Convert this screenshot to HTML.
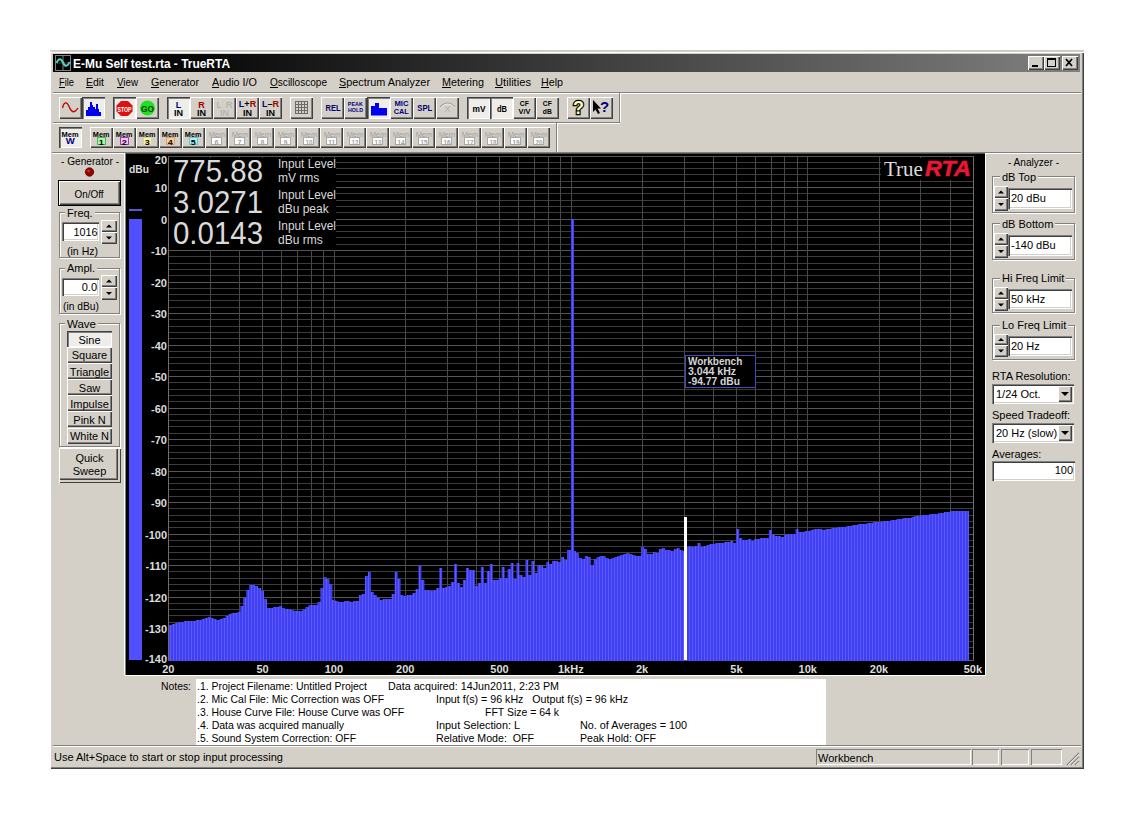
<!DOCTYPE html><html><head><meta charset="utf-8"><style>
html,body{margin:0;padding:0;background:#fff;width:1134px;height:819px;overflow:hidden;}
body{position:relative;font-family:"Liberation Sans",sans-serif;}
div{position:absolute;box-sizing:border-box;}
.t{white-space:pre;line-height:normal;}
</style></head><body>
<div style="position:absolute;left:51px;top:51px;width:1033px;height:718px;background:#d4d0c8;box-shadow:inset 0 1px #d4d0c8,inset 0 2px #fff,inset -1px -1px #404040,inset -2px -2px #808080;"></div>
<div style="position:absolute;left:50px;top:50px;width:1034px;height:1px;background:#c8c8c8;"></div>
<div style="position:absolute;left:53px;top:54px;width:1027px;height:18px;background:linear-gradient(to right,#000 0%,#0a0a0a 15%,#808080 100%);"></div>
<svg style="position:absolute;left:55px;top:55px" width="16" height="16" viewBox="0 0 16 16">
<rect x="0.5" y="0.5" width="15" height="15" fill="#000" stroke="#808080"/>
<line x1="8" y1="1" x2="8" y2="15" stroke="#808080"/><line x1="1" y1="8" x2="15" y2="8" stroke="#404040"/>
<path d="M1.5 8 C3.5 3 6 3 8 7.5 C10 12 12.5 12 14.5 7" fill="none" stroke="#50d0b8" stroke-width="2"/></svg>
<div class="t" style="left:73.00px;top:57px;font-size:12px;color:#fff;font-weight:bold;transform:scaleX(0.9950);transform-origin:0 0;">E-Mu Self test.rta - TrueRTA</div>
<div style="position:absolute;left:1028px;top:56px;width:16px;height:14px;background:#d4d0c8;box-shadow:inset 1px 1px #fff,inset -1px -1px #404040,inset -2px -2px #808080;"></div>
<div style="position:absolute;left:1044px;top:56px;width:16px;height:14px;background:#d4d0c8;box-shadow:inset 1px 1px #fff,inset -1px -1px #404040,inset -2px -2px #808080;"></div>
<div style="position:absolute;left:1062px;top:56px;width:16px;height:14px;background:#d4d0c8;box-shadow:inset 1px 1px #fff,inset -1px -1px #404040,inset -2px -2px #808080;"></div>
<svg style="position:absolute;left:1028px;top:56px" width="50" height="14">
<rect x="4" y="9" width="6" height="2" fill="#000"/>
<rect x="19.5" y="2.5" width="8" height="8" fill="none" stroke="#000"/><rect x="19" y="2" width="9" height="2" fill="#000"/>
<path d="M38 3 L44 10 M44 3 L38 10" stroke="#000" stroke-width="1.7"/></svg>
<div class="t" style="left:59.00px;top:76px;font-size:11px;color:#000;transform:scaleX(0.8463);transform-origin:0 0;">File</div>
<div style="position:absolute;left:59px;top:87px;width:6px;height:1px;background:#000;"></div>
<div class="t" style="left:86.00px;top:76px;font-size:11px;color:#000;transform:scaleX(0.9496);transform-origin:0 0;">Edit</div>
<div style="position:absolute;left:86px;top:87px;width:7px;height:1px;background:#000;"></div>
<div class="t" style="left:117.00px;top:76px;font-size:11px;color:#000;transform:scaleX(0.8882);transform-origin:0 0;">View</div>
<div style="position:absolute;left:117px;top:87px;width:7px;height:1px;background:#000;"></div>
<div class="t" style="left:151.00px;top:76px;font-size:11px;color:#000;transform:scaleX(0.9693);transform-origin:0 0;">Generator</div>
<div style="position:absolute;left:151px;top:87px;width:8px;height:1px;background:#000;"></div>
<div class="t" style="left:212.00px;top:76px;font-size:11px;color:#000;transform:scaleX(0.9813);transform-origin:0 0;">Audio I/O</div>
<div style="position:absolute;left:212px;top:87px;width:7px;height:1px;background:#000;"></div>
<div class="t" style="left:270.00px;top:76px;font-size:11px;color:#000;transform:scaleX(0.9141);transform-origin:0 0;">Oscilloscope</div>
<div style="position:absolute;left:270px;top:87px;width:8px;height:1px;background:#000;"></div>
<div class="t" style="left:339.00px;top:76px;font-size:11px;color:#000;transform:scaleX(0.9858);transform-origin:0 0;">Spectrum Analyzer</div>
<div style="position:absolute;left:339px;top:87px;width:7px;height:1px;background:#000;"></div>
<div class="t" style="left:442.00px;top:76px;font-size:11px;color:#000;transform:scaleX(0.9815);transform-origin:0 0;">Metering</div>
<div style="position:absolute;left:442px;top:87px;width:9px;height:1px;background:#000;"></div>
<div class="t" style="left:495.00px;top:76px;font-size:11px;color:#000;transform:scaleX(1.0155);transform-origin:0 0;">Utilities</div>
<div style="position:absolute;left:495px;top:87px;width:8px;height:1px;background:#000;"></div>
<div class="t" style="left:541.00px;top:76px;font-size:11px;color:#000;transform:scaleX(0.9725);transform-origin:0 0;">Help</div>
<div style="position:absolute;left:541px;top:87px;width:8px;height:1px;background:#000;"></div>
<div style="position:absolute;left:53px;top:92px;width:1028px;height:1px;background:#808080;"></div>
<div style="position:absolute;left:53px;top:93px;width:1028px;height:1px;background:#fff;"></div>
<div style="position:absolute;left:53px;top:122px;width:567px;height:1px;background:#808080;"></div>
<div style="position:absolute;left:53px;top:123px;width:567px;height:1px;background:#fff;"></div>
<div style="position:absolute;left:619px;top:93px;width:1px;height:29px;background:#808080;"></div>
<div style="position:absolute;left:620px;top:93px;width:1px;height:29px;background:#fff;"></div>
<div style="position:absolute;left:556px;top:123px;width:1px;height:29px;background:#808080;"></div>
<div style="position:absolute;left:557px;top:123px;width:1px;height:29px;background:#fff;"></div>
<div style="position:absolute;left:52px;top:152px;width:1029px;height:1px;background:#808080;"></div>
<div style="position:absolute;left:52px;top:153px;width:1029px;height:1px;background:#fff;"></div>
<div style="position:absolute;left:59px;top:97px;width:23px;height:22px;background:#d4d0c8;box-shadow:inset 1px 1px #fff,inset -1px -1px #404040,inset -2px -2px #808080;"></div>
<svg style="position:absolute;left:59px;top:97px" width="23" height="22"><path d="M3.5 11 C5 4.5 8 4.5 10 9.5 C12 14.5 15 17.5 19 11" fill="none" stroke="#c00000" stroke-width="1.3"/></svg>
<div style="position:absolute;left:82px;top:97px;width:23px;height:22px;background:#eeede9;box-shadow:inset 1px 1px #404040,inset 2px 2px #808080,inset -1px -1px #fff;"></div>
<svg style="position:absolute;left:82px;top:97px" width="23" height="22"><path d="M4 19 V13 H6 V10 H8 V5 H10 V8 H11 V10 H13 V12 H14 V7 H16 V12 H17 V15 H19 V19 Z" fill="#0000f0"/></svg>
<div style="position:absolute;left:113px;top:97px;width:23px;height:22px;background:#eeede9;box-shadow:inset 1px 1px #404040,inset 2px 2px #808080,inset -1px -1px #fff;"></div>
<svg style="position:absolute;left:113px;top:97px" width="23" height="22"><path d="M8 4 H15 L19.5 8.5 V14.5 L15 19 H8 L3.5 14.5 V8.5 Z" fill="#e01010"/><text x="11.5" y="14.5" font-family="Liberation Sans" font-weight="bold" font-size="7.5" fill="#fff" text-anchor="middle" textLength="14" lengthAdjust="spacingAndGlyphs">STOP</text></svg>
<div style="position:absolute;left:136px;top:97px;width:23px;height:22px;background:#d4d0c8;box-shadow:inset 1px 1px #fff,inset -1px -1px #404040,inset -2px -2px #808080;"></div>
<svg style="position:absolute;left:136px;top:97px" width="23" height="22"><circle cx="11.5" cy="11" r="7.5" fill="#20e020"/><text x="11.5" y="14.5" font-family="Liberation Sans" font-weight="bold" font-size="9.5" fill="#004000" text-anchor="middle" textLength="13" lengthAdjust="spacingAndGlyphs">GO</text></svg>
<div style="position:absolute;left:167px;top:97px;width:23px;height:22px;background:#eeede9;box-shadow:inset 1px 1px #404040,inset 2px 2px #808080,inset -1px -1px #fff;"></div>
<div class="t" style="left:175.75px;top:100px;font-size:9px;color:#000080;font-weight:bold;">L</div>
<div class="t" style="left:174.00px;top:108px;font-size:9px;color:#000;font-weight:bold;">IN</div>
<div style="position:absolute;left:190px;top:97px;width:23px;height:22px;background:#d4d0c8;box-shadow:inset 1px 1px #fff,inset -1px -1px #404040,inset -2px -2px #808080;"></div>
<div class="t" style="left:198.25px;top:100px;font-size:9px;color:#a00000;font-weight:bold;">R</div>
<div class="t" style="left:197.00px;top:108px;font-size:9px;color:#000;font-weight:bold;">IN</div>
<div style="position:absolute;left:213px;top:97px;width:23px;height:22px;background:#d4d0c8;box-shadow:inset 1px 1px #fff,inset -1px -1px #404040,inset -2px -2px #808080;"></div>
<div class="t" style="left:216.41px;top:100px;font-size:9px;color:#a8a8a8;">L  R</div>
<div class="t" style="left:220.00px;top:108px;font-size:9px;color:#a8a8a8;">IN</div>
<div style="position:absolute;left:236px;top:97px;width:23px;height:22px;background:#d4d0c8;box-shadow:inset 1px 1px #fff,inset -1px -1px #404040,inset -2px -2px #808080;"></div>
<div class="t" style="left:238px;top:99px;width:19px;text-align:center;font-size:9px;font-weight:bold;color:#000080">L<span style="color:#000">+</span><span style="color:#a00000">R</span></div>
<div class="t" style="left:243.00px;top:108px;font-size:9px;color:#000;font-weight:bold;">IN</div>
<div style="position:absolute;left:259px;top:97px;width:23px;height:22px;background:#d4d0c8;box-shadow:inset 1px 1px #fff,inset -1px -1px #404040,inset -2px -2px #808080;"></div>
<div class="t" style="left:261px;top:99px;width:19px;text-align:center;font-size:9px;font-weight:bold;color:#000080">L<span style="color:#000">–</span><span style="color:#a00000">R</span></div>
<div class="t" style="left:266.00px;top:108px;font-size:9px;color:#000;font-weight:bold;">IN</div>
<div style="position:absolute;left:290px;top:97px;width:23px;height:22px;background:#d4d0c8;box-shadow:inset 1px 1px #fff,inset -1px -1px #404040,inset -2px -2px #808080;"></div>
<svg style="position:absolute;left:290px;top:97px" width="23" height="22"><rect x="5" y="4" width="1" height="13" fill="#6a6a6a"/><rect x="8" y="4" width="1" height="13" fill="#6a6a6a"/><rect x="11" y="4" width="1" height="13" fill="#6a6a6a"/><rect x="14" y="4" width="1" height="13" fill="#6a6a6a"/><rect x="17" y="4" width="1" height="13" fill="#6a6a6a"/><rect x="5" y="4" width="13" height="1" fill="#6a6a6a"/><rect x="5" y="7" width="13" height="1" fill="#6a6a6a"/><rect x="5" y="10" width="13" height="1" fill="#6a6a6a"/><rect x="5" y="13" width="13" height="1" fill="#6a6a6a"/><rect x="5" y="16" width="13" height="1" fill="#6a6a6a"/></svg>
<div style="position:absolute;left:321px;top:97px;width:23px;height:22px;background:#d4d0c8;box-shadow:inset 1px 1px #fff,inset -1px -1px #404040,inset -2px -2px #808080;"></div>
<div class="t" style="left:323.50px;top:103px;font-size:9px;color:#000070;font-weight:bold;transform:scaleX(0.8333);transform-origin:50% 0;">REL</div>
<div style="position:absolute;left:344px;top:97px;width:23px;height:22px;background:#d4d0c8;box-shadow:inset 1px 1px #fff,inset -1px -1px #404040,inset -2px -2px #808080;"></div>
<div class="t" style="left:347.16px;top:101px;font-size:6px;color:#000080;font-weight:bold;transform:scaleX(0.8998);transform-origin:50% 0;">PEAK</div>
<div class="t" style="left:347.00px;top:107px;font-size:6px;color:#000080;font-weight:bold;transform:scaleX(0.8825);transform-origin:50% 0;">HOLD</div>
<div style="position:absolute;left:367px;top:97px;width:23px;height:22px;background:#eeede9;box-shadow:inset 1px 1px #404040,inset 2px 2px #808080,inset -1px -1px #fff;"></div>
<svg style="position:absolute;left:367px;top:97px" width="23" height="22"><path d="M4 18.5 V9 H8 V6 H12 V11 H20 V18.5 Z" fill="#0000f0"/></svg>
<div style="position:absolute;left:390px;top:97px;width:23px;height:22px;background:#d4d0c8;box-shadow:inset 1px 1px #fff,inset -1px -1px #404040,inset -2px -2px #808080;"></div>
<div class="t" style="left:395.08px;top:100px;font-size:7px;color:#000080;font-weight:bold;transform:scaleX(1.0911);transform-origin:50% 0;">MIC</div>
<div class="t" style="left:394.31px;top:108px;font-size:7px;color:#000080;font-weight:bold;transform:scaleX(1.0427);transform-origin:50% 0;">CAL</div>
<div style="position:absolute;left:413px;top:97px;width:23px;height:22px;background:#d4d0c8;box-shadow:inset 1px 1px #fff,inset -1px -1px #404040,inset -2px -2px #808080;"></div>
<div class="t" style="left:415.75px;top:103px;font-size:9px;color:#000070;font-weight:bold;transform:scaleX(0.8570);transform-origin:50% 0;">SPL</div>
<div style="position:absolute;left:436px;top:97px;width:23px;height:22px;background:#d4d0c8;box-shadow:inset 1px 1px #fff,inset -1px -1px #404040,inset -2px -2px #808080;"></div>
<svg style="position:absolute;left:436px;top:97px" width="23" height="22"><path d="M4 10 Q11.5 2 19 10" fill="none" stroke="#a0a0a0" stroke-width="1.2"/><path d="M9 9 L14 15 M14 9 L9 15" stroke="#b0b0b0" stroke-width="1"/><path d="M4.5 11 Q11.5 3 19.5 11" fill="none" stroke="#fff" stroke-width="0.6"/></svg>
<div style="position:absolute;left:467px;top:97px;width:23px;height:22px;background:#eeede9;box-shadow:inset 1px 1px #404040,inset 2px 2px #808080,inset -1px -1px #fff;"></div>
<div class="t" style="left:471.50px;top:104px;font-size:9px;color:#000;font-weight:bold;transform:scaleX(0.9282);transform-origin:50% 0;">mV</div>
<div style="position:absolute;left:490px;top:97px;width:23px;height:22px;background:#eeede9;box-shadow:inset 1px 1px #404040,inset 2px 2px #808080,inset -1px -1px #fff;"></div>
<div class="t" style="left:495.50px;top:104px;font-size:9px;color:#000;font-weight:bold;transform:scaleX(0.8336);transform-origin:50% 0;">dB</div>
<div style="position:absolute;left:513px;top:97px;width:23px;height:22px;background:#d4d0c8;box-shadow:inset 1px 1px #fff,inset -1px -1px #404040,inset -2px -2px #808080;"></div>
<div class="t" style="left:519.17px;top:99px;font-size:8px;color:#000;font-weight:bold;transform:scaleX(0.8440);transform-origin:50% 0;">CF</div>
<div class="t" style="left:518.05px;top:107px;font-size:8px;color:#000;font-weight:bold;transform:scaleX(0.9306);transform-origin:50% 0;">V/V</div>
<div style="position:absolute;left:536px;top:97px;width:23px;height:22px;background:#d4d0c8;box-shadow:inset 1px 1px #fff,inset -1px -1px #404040,inset -2px -2px #808080;"></div>
<div class="t" style="left:542.17px;top:99px;font-size:8px;color:#000;font-weight:bold;transform:scaleX(0.8440);transform-origin:50% 0;">CF</div>
<div class="t" style="left:542.17px;top:107px;font-size:8px;color:#000;font-weight:bold;transform:scaleX(0.8440);transform-origin:50% 0;">dB</div>
<div style="position:absolute;left:567px;top:97px;width:23px;height:22px;background:#d4d0c8;box-shadow:inset 1px 1px #fff,inset -1px -1px #404040,inset -2px -2px #808080;"></div>
<svg style="position:absolute;left:567px;top:97px" width="23" height="22"><text x="11.5" y="16.5" font-family="Liberation Sans" font-weight="bold" font-size="18" fill="#ffffb0" stroke="#000" stroke-width="2.4" text-anchor="middle" paint-order="stroke">?</text></svg>
<div style="position:absolute;left:590px;top:97px;width:23px;height:22px;background:#d4d0c8;box-shadow:inset 1px 1px #fff,inset -1px -1px #404040,inset -2px -2px #808080;"></div>
<svg style="position:absolute;left:590px;top:97px" width="23" height="22"><path d="M3 3 L3 15 L5.5 12.5 L8 17 L10 16 L7.5 11.5 L11 11.5 Z" fill="#000"/><text x="14.5" y="14.5" font-family="Liberation Sans" font-weight="bold" font-size="15" fill="#000080" text-anchor="middle">?</text></svg>
<div style="position:absolute;left:59px;top:127px;width:23px;height:21px;background:#eeede9;box-shadow:inset 1px 1px #404040,inset 2px 2px #808080,inset -1px -1px #fff;"></div>
<div class="t" style="left:61.39px;top:130px;font-size:8px;color:#000;font-weight:bold;transform:scaleX(0.9327);transform-origin:50% 0;">Mem</div>
<div class="t" style="left:66.25px;top:136px;font-size:9px;color:#000080;font-weight:bold;transform:scaleX(1.0594);transform-origin:50% 0;">W</div>
<div style="position:absolute;left:90px;top:127px;width:23px;height:21px;background:#d4d0c8;box-shadow:inset 1px 1px #fff,inset -1px -1px #404040,inset -2px -2px #808080;"></div>
<div class="t" style="left:92.39px;top:130px;font-size:8px;color:#000;font-weight:bold;transform:scaleX(0.9053);transform-origin:50% 0;">Mem</div>
<div style="position:absolute;left:97px;top:137px;width:9px;height:8px;background:#b0f0b0;border:1px solid #40c040;"></div>
<div class="t" style="left:99.28px;top:138px;font-size:8px;color:#000;font-weight:bold;transform:scaleX(1.1239);transform-origin:50% 0;">1</div>
<div style="position:absolute;left:113px;top:127px;width:23px;height:21px;background:#d4d0c8;box-shadow:inset 1px 1px #fff,inset -1px -1px #404040,inset -2px -2px #808080;"></div>
<div class="t" style="left:115.39px;top:130px;font-size:8px;color:#000;font-weight:bold;transform:scaleX(0.9053);transform-origin:50% 0;">Mem</div>
<div style="position:absolute;left:120px;top:137px;width:9px;height:8px;background:#f0c0f0;border:1px solid #b030c0;"></div>
<div class="t" style="left:122.28px;top:138px;font-size:8px;color:#000;font-weight:bold;transform:scaleX(1.1239);transform-origin:50% 0;">2</div>
<div style="position:absolute;left:136px;top:127px;width:23px;height:21px;background:#d4d0c8;box-shadow:inset 1px 1px #fff,inset -1px -1px #404040,inset -2px -2px #808080;"></div>
<div class="t" style="left:138.39px;top:130px;font-size:8px;color:#000;font-weight:bold;transform:scaleX(0.9053);transform-origin:50% 0;">Mem</div>
<div style="position:absolute;left:143px;top:137px;width:9px;height:8px;background:#f4f4b0;border:1px solid #d8d890;"></div>
<div class="t" style="left:145.28px;top:138px;font-size:8px;color:#000;font-weight:bold;transform:scaleX(1.1239);transform-origin:50% 0;">3</div>
<div style="position:absolute;left:159px;top:127px;width:23px;height:21px;background:#d4d0c8;box-shadow:inset 1px 1px #fff,inset -1px -1px #404040,inset -2px -2px #808080;"></div>
<div class="t" style="left:161.39px;top:130px;font-size:8px;color:#000;font-weight:bold;transform:scaleX(0.9053);transform-origin:50% 0;">Mem</div>
<div style="position:absolute;left:166px;top:137px;width:9px;height:8px;background:#f4d0a0;border:1px solid #e0a060;"></div>
<div class="t" style="left:168.28px;top:138px;font-size:8px;color:#000;font-weight:bold;transform:scaleX(1.1239);transform-origin:50% 0;">4</div>
<div style="position:absolute;left:182px;top:127px;width:23px;height:21px;background:#d4d0c8;box-shadow:inset 1px 1px #fff,inset -1px -1px #404040,inset -2px -2px #808080;"></div>
<div class="t" style="left:184.39px;top:130px;font-size:8px;color:#000;font-weight:bold;transform:scaleX(0.9053);transform-origin:50% 0;">Mem</div>
<div style="position:absolute;left:189px;top:137px;width:9px;height:8px;background:#b0f0f0;border:1px solid #60c8d0;"></div>
<div class="t" style="left:191.28px;top:138px;font-size:8px;color:#000;font-weight:bold;transform:scaleX(1.1239);transform-origin:50% 0;">5</div>
<div style="position:absolute;left:205px;top:127px;width:23px;height:21px;background:#d4d0c8;box-shadow:inset 1px 1px #fff,inset -1px -1px #404040,inset -2px -2px #808080;"></div>
<div class="t" style="left:207.61px;top:130px;font-size:8px;color:#a0a0a0;transform:scaleX(0.9282);transform-origin:50% 0;">Mem</div>
<div style="position:absolute;left:211px;top:137px;width:11px;height:8px;border:1px solid #a8a8a8;background:#fff;"></div>
<div class="t" style="left:214.55px;top:139px;font-size:7px;color:#a0a0a0;font-weight:bold;">6</div>
<div style="position:absolute;left:228px;top:127px;width:23px;height:21px;background:#d4d0c8;box-shadow:inset 1px 1px #fff,inset -1px -1px #404040,inset -2px -2px #808080;"></div>
<div class="t" style="left:230.61px;top:130px;font-size:8px;color:#a0a0a0;transform:scaleX(0.9282);transform-origin:50% 0;">Mem</div>
<div style="position:absolute;left:234px;top:137px;width:11px;height:8px;border:1px solid #a8a8a8;background:#fff;"></div>
<div class="t" style="left:237.55px;top:139px;font-size:7px;color:#a0a0a0;font-weight:bold;">7</div>
<div style="position:absolute;left:251px;top:127px;width:23px;height:21px;background:#d4d0c8;box-shadow:inset 1px 1px #fff,inset -1px -1px #404040,inset -2px -2px #808080;"></div>
<div class="t" style="left:253.61px;top:130px;font-size:8px;color:#a0a0a0;transform:scaleX(0.9282);transform-origin:50% 0;">Mem</div>
<div style="position:absolute;left:257px;top:137px;width:11px;height:8px;border:1px solid #a8a8a8;background:#fff;"></div>
<div class="t" style="left:260.55px;top:139px;font-size:7px;color:#a0a0a0;font-weight:bold;">8</div>
<div style="position:absolute;left:274px;top:127px;width:23px;height:21px;background:#d4d0c8;box-shadow:inset 1px 1px #fff,inset -1px -1px #404040,inset -2px -2px #808080;"></div>
<div class="t" style="left:276.61px;top:130px;font-size:8px;color:#a0a0a0;transform:scaleX(0.9282);transform-origin:50% 0;">Mem</div>
<div style="position:absolute;left:280px;top:137px;width:11px;height:8px;border:1px solid #a8a8a8;background:#fff;"></div>
<div class="t" style="left:283.55px;top:139px;font-size:7px;color:#a0a0a0;font-weight:bold;">9</div>
<div style="position:absolute;left:297px;top:127px;width:23px;height:21px;background:#d4d0c8;box-shadow:inset 1px 1px #fff,inset -1px -1px #404040,inset -2px -2px #808080;"></div>
<div class="t" style="left:299.61px;top:130px;font-size:8px;color:#a0a0a0;transform:scaleX(0.9282);transform-origin:50% 0;">Mem</div>
<div style="position:absolute;left:303px;top:137px;width:11px;height:8px;border:1px solid #a8a8a8;background:#fff;"></div>
<div class="t" style="left:304.61px;top:139px;font-size:7px;color:#a0a0a0;font-weight:bold;transform:scaleX(0.8991);transform-origin:50% 0;">10</div>
<div style="position:absolute;left:320px;top:127px;width:23px;height:21px;background:#d4d0c8;box-shadow:inset 1px 1px #fff,inset -1px -1px #404040,inset -2px -2px #808080;"></div>
<div class="t" style="left:322.61px;top:130px;font-size:8px;color:#a0a0a0;transform:scaleX(0.9282);transform-origin:50% 0;">Mem</div>
<div style="position:absolute;left:326px;top:137px;width:11px;height:8px;border:1px solid #a8a8a8;background:#fff;"></div>
<div class="t" style="left:327.80px;top:139px;font-size:7px;color:#a0a0a0;font-weight:bold;transform:scaleX(0.9460);transform-origin:50% 0;">11</div>
<div style="position:absolute;left:343px;top:127px;width:23px;height:21px;background:#d4d0c8;box-shadow:inset 1px 1px #fff,inset -1px -1px #404040,inset -2px -2px #808080;"></div>
<div class="t" style="left:345.61px;top:130px;font-size:8px;color:#a0a0a0;transform:scaleX(0.9282);transform-origin:50% 0;">Mem</div>
<div style="position:absolute;left:349px;top:137px;width:11px;height:8px;border:1px solid #a8a8a8;background:#fff;"></div>
<div class="t" style="left:350.61px;top:139px;font-size:7px;color:#a0a0a0;font-weight:bold;transform:scaleX(0.8991);transform-origin:50% 0;">12</div>
<div style="position:absolute;left:366px;top:127px;width:23px;height:21px;background:#d4d0c8;box-shadow:inset 1px 1px #fff,inset -1px -1px #404040,inset -2px -2px #808080;"></div>
<div class="t" style="left:368.61px;top:130px;font-size:8px;color:#a0a0a0;transform:scaleX(0.9282);transform-origin:50% 0;">Mem</div>
<div style="position:absolute;left:372px;top:137px;width:11px;height:8px;border:1px solid #a8a8a8;background:#fff;"></div>
<div class="t" style="left:373.61px;top:139px;font-size:7px;color:#a0a0a0;font-weight:bold;transform:scaleX(0.8991);transform-origin:50% 0;">13</div>
<div style="position:absolute;left:389px;top:127px;width:23px;height:21px;background:#d4d0c8;box-shadow:inset 1px 1px #fff,inset -1px -1px #404040,inset -2px -2px #808080;"></div>
<div class="t" style="left:391.61px;top:130px;font-size:8px;color:#a0a0a0;transform:scaleX(0.9282);transform-origin:50% 0;">Mem</div>
<div style="position:absolute;left:395px;top:137px;width:11px;height:8px;border:1px solid #a8a8a8;background:#fff;"></div>
<div class="t" style="left:396.61px;top:139px;font-size:7px;color:#a0a0a0;font-weight:bold;transform:scaleX(0.8991);transform-origin:50% 0;">14</div>
<div style="position:absolute;left:412px;top:127px;width:23px;height:21px;background:#d4d0c8;box-shadow:inset 1px 1px #fff,inset -1px -1px #404040,inset -2px -2px #808080;"></div>
<div class="t" style="left:414.61px;top:130px;font-size:8px;color:#a0a0a0;transform:scaleX(0.9282);transform-origin:50% 0;">Mem</div>
<div style="position:absolute;left:418px;top:137px;width:11px;height:8px;border:1px solid #a8a8a8;background:#fff;"></div>
<div class="t" style="left:419.61px;top:139px;font-size:7px;color:#a0a0a0;font-weight:bold;transform:scaleX(0.8991);transform-origin:50% 0;">15</div>
<div style="position:absolute;left:435px;top:127px;width:23px;height:21px;background:#d4d0c8;box-shadow:inset 1px 1px #fff,inset -1px -1px #404040,inset -2px -2px #808080;"></div>
<div class="t" style="left:437.61px;top:130px;font-size:8px;color:#a0a0a0;transform:scaleX(0.9282);transform-origin:50% 0;">Mem</div>
<div style="position:absolute;left:441px;top:137px;width:11px;height:8px;border:1px solid #a8a8a8;background:#fff;"></div>
<div class="t" style="left:442.61px;top:139px;font-size:7px;color:#a0a0a0;font-weight:bold;transform:scaleX(0.8991);transform-origin:50% 0;">16</div>
<div style="position:absolute;left:458px;top:127px;width:23px;height:21px;background:#d4d0c8;box-shadow:inset 1px 1px #fff,inset -1px -1px #404040,inset -2px -2px #808080;"></div>
<div class="t" style="left:460.61px;top:130px;font-size:8px;color:#a0a0a0;transform:scaleX(0.9282);transform-origin:50% 0;">Mem</div>
<div style="position:absolute;left:464px;top:137px;width:11px;height:8px;border:1px solid #a8a8a8;background:#fff;"></div>
<div class="t" style="left:465.61px;top:139px;font-size:7px;color:#a0a0a0;font-weight:bold;transform:scaleX(0.8991);transform-origin:50% 0;">17</div>
<div style="position:absolute;left:481px;top:127px;width:23px;height:21px;background:#d4d0c8;box-shadow:inset 1px 1px #fff,inset -1px -1px #404040,inset -2px -2px #808080;"></div>
<div class="t" style="left:483.61px;top:130px;font-size:8px;color:#a0a0a0;transform:scaleX(0.9282);transform-origin:50% 0;">Mem</div>
<div style="position:absolute;left:487px;top:137px;width:11px;height:8px;border:1px solid #a8a8a8;background:#fff;"></div>
<div class="t" style="left:488.61px;top:139px;font-size:7px;color:#a0a0a0;font-weight:bold;transform:scaleX(0.8991);transform-origin:50% 0;">18</div>
<div style="position:absolute;left:504px;top:127px;width:23px;height:21px;background:#d4d0c8;box-shadow:inset 1px 1px #fff,inset -1px -1px #404040,inset -2px -2px #808080;"></div>
<div class="t" style="left:506.61px;top:130px;font-size:8px;color:#a0a0a0;transform:scaleX(0.9282);transform-origin:50% 0;">Mem</div>
<div style="position:absolute;left:510px;top:137px;width:11px;height:8px;border:1px solid #a8a8a8;background:#fff;"></div>
<div class="t" style="left:511.61px;top:139px;font-size:7px;color:#a0a0a0;font-weight:bold;transform:scaleX(0.8991);transform-origin:50% 0;">19</div>
<div style="position:absolute;left:527px;top:127px;width:23px;height:21px;background:#d4d0c8;box-shadow:inset 1px 1px #fff,inset -1px -1px #404040,inset -2px -2px #808080;"></div>
<div class="t" style="left:529.61px;top:130px;font-size:8px;color:#a0a0a0;transform:scaleX(0.9282);transform-origin:50% 0;">Mem</div>
<div style="position:absolute;left:533px;top:137px;width:11px;height:8px;border:1px solid #a8a8a8;background:#fff;"></div>
<div class="t" style="left:534.61px;top:139px;font-size:7px;color:#a0a0a0;font-weight:bold;transform:scaleX(0.8991);transform-origin:50% 0;">20</div>
<svg style="position:absolute;left:0;top:0" width="1134" height="819"><defs><pattern id="st" x="0" y="0" width="3" height="10" patternUnits="userSpaceOnUse"><rect x="0" y="0" width="2" height="10" fill="#4040f2"/><rect x="2" y="0" width="1" height="10" fill="#5a5aff"/></pattern></defs><rect x="125" y="153" width="861" height="1" fill="#505050"/><rect x="125" y="153" width="1" height="523" fill="#808080"/><rect x="125" y="675" width="861" height="1" fill="#fff"/><rect x="985" y="153" width="1" height="523" fill="#fff"/><rect x="126" y="154" width="859" height="521" fill="#000"/><rect x="168" y="156" width="806" height="1" fill="#565656"/><rect x="168" y="162" width="806" height="1" fill="#3c3c3c"/><rect x="168" y="168" width="806" height="1" fill="#3c3c3c"/><rect x="168" y="174" width="806" height="1" fill="#3c3c3c"/><rect x="168" y="181" width="806" height="1" fill="#3c3c3c"/><rect x="168" y="187" width="806" height="1" fill="#565656"/><rect x="168" y="193" width="806" height="1" fill="#3c3c3c"/><rect x="168" y="200" width="806" height="1" fill="#3c3c3c"/><rect x="168" y="206" width="806" height="1" fill="#3c3c3c"/><rect x="168" y="212" width="806" height="1" fill="#3c3c3c"/><rect x="168" y="219" width="806" height="1" fill="#565656"/><rect x="168" y="225" width="806" height="1" fill="#3c3c3c"/><rect x="168" y="231" width="806" height="1" fill="#3c3c3c"/><rect x="168" y="237" width="806" height="1" fill="#3c3c3c"/><rect x="168" y="244" width="806" height="1" fill="#3c3c3c"/><rect x="168" y="250" width="806" height="1" fill="#565656"/><rect x="168" y="256" width="806" height="1" fill="#3c3c3c"/><rect x="168" y="263" width="806" height="1" fill="#3c3c3c"/><rect x="168" y="269" width="806" height="1" fill="#3c3c3c"/><rect x="168" y="275" width="806" height="1" fill="#3c3c3c"/><rect x="168" y="282" width="806" height="1" fill="#565656"/><rect x="168" y="288" width="806" height="1" fill="#3c3c3c"/><rect x="168" y="294" width="806" height="1" fill="#3c3c3c"/><rect x="168" y="300" width="806" height="1" fill="#3c3c3c"/><rect x="168" y="307" width="806" height="1" fill="#3c3c3c"/><rect x="168" y="313" width="806" height="1" fill="#565656"/><rect x="168" y="319" width="806" height="1" fill="#3c3c3c"/><rect x="168" y="326" width="806" height="1" fill="#3c3c3c"/><rect x="168" y="332" width="806" height="1" fill="#3c3c3c"/><rect x="168" y="338" width="806" height="1" fill="#3c3c3c"/><rect x="168" y="345" width="806" height="1" fill="#565656"/><rect x="168" y="351" width="806" height="1" fill="#3c3c3c"/><rect x="168" y="357" width="806" height="1" fill="#3c3c3c"/><rect x="168" y="363" width="806" height="1" fill="#3c3c3c"/><rect x="168" y="370" width="806" height="1" fill="#3c3c3c"/><rect x="168" y="376" width="806" height="1" fill="#565656"/><rect x="168" y="382" width="806" height="1" fill="#3c3c3c"/><rect x="168" y="389" width="806" height="1" fill="#3c3c3c"/><rect x="168" y="395" width="806" height="1" fill="#3c3c3c"/><rect x="168" y="401" width="806" height="1" fill="#3c3c3c"/><rect x="168" y="408" width="806" height="1" fill="#565656"/><rect x="168" y="414" width="806" height="1" fill="#3c3c3c"/><rect x="168" y="420" width="806" height="1" fill="#3c3c3c"/><rect x="168" y="426" width="806" height="1" fill="#3c3c3c"/><rect x="168" y="433" width="806" height="1" fill="#3c3c3c"/><rect x="168" y="439" width="806" height="1" fill="#565656"/><rect x="168" y="445" width="806" height="1" fill="#3c3c3c"/><rect x="168" y="452" width="806" height="1" fill="#3c3c3c"/><rect x="168" y="458" width="806" height="1" fill="#3c3c3c"/><rect x="168" y="464" width="806" height="1" fill="#3c3c3c"/><rect x="168" y="471" width="806" height="1" fill="#565656"/><rect x="168" y="477" width="806" height="1" fill="#3c3c3c"/><rect x="168" y="483" width="806" height="1" fill="#3c3c3c"/><rect x="168" y="489" width="806" height="1" fill="#3c3c3c"/><rect x="168" y="496" width="806" height="1" fill="#3c3c3c"/><rect x="168" y="502" width="806" height="1" fill="#565656"/><rect x="168" y="508" width="806" height="1" fill="#3c3c3c"/><rect x="168" y="515" width="806" height="1" fill="#3c3c3c"/><rect x="168" y="521" width="806" height="1" fill="#3c3c3c"/><rect x="168" y="527" width="806" height="1" fill="#3c3c3c"/><rect x="168" y="534" width="806" height="1" fill="#565656"/><rect x="168" y="540" width="806" height="1" fill="#3c3c3c"/><rect x="168" y="546" width="806" height="1" fill="#3c3c3c"/><rect x="168" y="552" width="806" height="1" fill="#3c3c3c"/><rect x="168" y="559" width="806" height="1" fill="#3c3c3c"/><rect x="168" y="565" width="806" height="1" fill="#565656"/><rect x="168" y="571" width="806" height="1" fill="#3c3c3c"/><rect x="168" y="578" width="806" height="1" fill="#3c3c3c"/><rect x="168" y="584" width="806" height="1" fill="#3c3c3c"/><rect x="168" y="590" width="806" height="1" fill="#3c3c3c"/><rect x="168" y="597" width="806" height="1" fill="#565656"/><rect x="168" y="603" width="806" height="1" fill="#3c3c3c"/><rect x="168" y="609" width="806" height="1" fill="#3c3c3c"/><rect x="168" y="615" width="806" height="1" fill="#3c3c3c"/><rect x="168" y="622" width="806" height="1" fill="#3c3c3c"/><rect x="168" y="628" width="806" height="1" fill="#565656"/><rect x="168" y="634" width="806" height="1" fill="#3c3c3c"/><rect x="168" y="641" width="806" height="1" fill="#3c3c3c"/><rect x="168" y="647" width="806" height="1" fill="#3c3c3c"/><rect x="168" y="653" width="806" height="1" fill="#3c3c3c"/><rect x="168" y="660" width="806" height="1" fill="#565656"/><rect x="168" y="157" width="1" height="503" fill="#6e6e6e"/><rect x="210" y="157" width="1" height="503" fill="#484848"/><rect x="239" y="157" width="1" height="503" fill="#484848"/><rect x="262" y="157" width="1" height="503" fill="#484848"/><rect x="281" y="157" width="1" height="503" fill="#484848"/><rect x="297" y="157" width="1" height="503" fill="#484848"/><rect x="311" y="157" width="1" height="503" fill="#484848"/><rect x="323" y="157" width="1" height="503" fill="#484848"/><rect x="334" y="157" width="1" height="503" fill="#484848"/><rect x="405" y="157" width="1" height="503" fill="#484848"/><rect x="447" y="157" width="1" height="503" fill="#484848"/><rect x="476" y="157" width="1" height="503" fill="#484848"/><rect x="499" y="157" width="1" height="503" fill="#484848"/><rect x="518" y="157" width="1" height="503" fill="#484848"/><rect x="534" y="157" width="1" height="503" fill="#484848"/><rect x="548" y="157" width="1" height="503" fill="#484848"/><rect x="560" y="157" width="1" height="503" fill="#484848"/><rect x="571" y="157" width="1" height="503" fill="#484848"/><rect x="642" y="157" width="1" height="503" fill="#484848"/><rect x="684" y="157" width="1" height="503" fill="#484848"/><rect x="713" y="157" width="1" height="503" fill="#484848"/><rect x="736" y="157" width="1" height="503" fill="#484848"/><rect x="755" y="157" width="1" height="503" fill="#484848"/><rect x="771" y="157" width="1" height="503" fill="#484848"/><rect x="784" y="157" width="1" height="503" fill="#484848"/><rect x="797" y="157" width="1" height="503" fill="#484848"/><rect x="807" y="157" width="1" height="503" fill="#484848"/><rect x="879" y="157" width="1" height="503" fill="#484848"/><rect x="920" y="157" width="1" height="503" fill="#484848"/><rect x="950" y="157" width="1" height="503" fill="#484848"/><rect x="973" y="157" width="1" height="503" fill="#6e6e6e"/><path d="M169 661 V625 H172.0 V624 H174.9 V623 H177.9 V622 H180.9 V622 H183.8 V621 H186.8 V621 H189.8 V621 H192.8 V621 H195.7 V620 H198.7 V620 H201.7 V619 H204.6 V618 H207.6 V617 H210.6 V618 H213.5 V619 H216.5 V620 H219.5 V619 H222.5 V618 H225.4 V616 H228.4 V614 H231.4 V613 H234.3 V613 H237.3 V612 H240.3 V606 H243.2 V598 H246.2 V590 H249.2 V585 H252.2 V585 H255.1 V586 H258.1 V588 H261.1 V591 H264.0 V599 H267.0 V608 H270.0 V608 H272.9 V607 H275.9 V607 H278.9 V606 H281.9 V608 H284.8 V609 H287.8 V609 H290.8 V610 H293.7 V611 H296.7 V611 H299.7 V611 H302.6 V609 H305.6 V607 H308.6 V605 H311.6 V605 H314.5 V605 H317.5 V602 H320.5 V588 H323.4 V577 H326.4 V579 H329.4 V584 H332.3 V600 H335.3 V601 H338.3 V602 H341.2 V602 H344.2 V601 H347.2 V601 H350.2 V602 H353.1 V601 H356.1 V601 H359.1 V595 H362.0 V594 H365.0 V576 H368.0 V572 H370.9 V592 H373.9 V595 H376.9 V598 H379.9 V600 H382.8 V599 H385.8 V599 H388.8 V599 H391.7 V594 H394.7 V572 H397.7 V579 H400.6 V595 H403.6 V596 H406.6 V595 H409.6 V595 H412.5 V593 H415.5 V589 H418.5 V566 H421.4 V580 H424.4 V590 H427.4 V590 H430.3 V591 H433.3 V590 H436.3 V588 H439.3 V568 H442.2 V588 H445.2 V587 H448.2 V586 H451.1 V582 H454.1 V564 H457.1 V583 H460.0 V587 H463.0 V580 H466.0 V568 H469.0 V570 H471.9 V570 H474.9 V586 H477.9 V583 H480.8 V567 H483.8 V583 H486.8 V571 H489.7 V564 H492.7 V580 H495.7 V580 H498.7 V578 H501.6 V567 H504.6 V578 H507.6 V569 H510.5 V563 H513.5 V579 H516.5 V563 H519.4 V575 H522.4 V577 H525.4 V560 H528.3 V575 H531.3 V561 H534.3 V573 H537.3 V565 H540.2 V566 H543.2 V568 H546.2 V562 H549.1 V564 H552.1 V561 H555.1 V561 H558.0 V562 H561.0 V557 H564.0 V560 H567.0 V550 H569.9 V550 H572.9 V551 H575.9 V553 H578.8 V558 H581.8 V559 H584.8 V556 H587.7 V557 H590.7 V565 H593.7 V559 H596.7 V557 H599.6 V556 H602.6 V556 H605.6 V558 H608.5 V559 H611.5 V558 H614.5 V557 H617.4 V556 H620.4 V555 H623.4 V554 H626.4 V553 H629.3 V554 H632.3 V555 H635.3 V556 H638.2 V556 H641.2 V547 H644.2 V549 H647.1 V554 H650.1 V554 H653.1 V552 H656.1 V553 H659.0 V549 H662.0 V548 H665.0 V550 H667.9 V550 H670.9 V551 H673.9 V549 H676.8 V548 H679.8 V550 H682.8 V551 H685.7 V547 H688.7 V546 H691.7 V547 H694.7 V546 H697.6 V543 H700.6 V547 H703.6 V546 H706.5 V545 H709.5 V544 H712.5 V544 H715.4 V543 H718.4 V543 H721.4 V543 H724.4 V542 H727.3 V542 H730.3 V541 H733.3 V543 H736.2 V529 H739.2 V538 H742.2 V540 H745.1 V540 H748.1 V539 H751.1 V541 H754.1 V539 H757.0 V539 H760.0 V538 H763.0 V538 H765.9 V538 H768.9 V530 H771.9 V535 H774.8 V536 H777.8 V536 H780.8 V537 H783.8 V535 H786.7 V534 H789.7 V534 H792.7 V534 H795.6 V529 H798.6 V532 H801.6 V532 H804.5 V531 H807.5 V531 H810.5 V530 H813.5 V529 H816.4 V529 H819.4 V529 H822.4 V530 H825.3 V529 H828.3 V529 H831.3 V528 H834.2 V528 H837.2 V527 H840.2 V527 H843.1 V527 H846.1 V526 H849.1 V526 H852.1 V525 H855.0 V525 H858.0 V524 H861.0 V524 H863.9 V524 H866.9 V523 H869.9 V523 H872.8 V522 H875.8 V522 H878.8 V522 H881.8 V521 H884.7 V521 H887.7 V521 H890.7 V520 H893.6 V520 H896.6 V519 H899.6 V519 H902.5 V518 H905.5 V518 H908.5 V518 H911.5 V517 H914.4 V516 H917.4 V516 H920.4 V515 H923.3 V515 H926.3 V515 H929.3 V514 H932.2 V514 H935.2 V514 H938.2 V513 H941.2 V513 H944.1 V512 H947.1 V512 H950.1 V511 H953.0 V511 H956.0 V511 H959.0 V511 H961.9 V511 H964.9 V511 H967.9 V511 H969.0 V661 Z" fill="url(#st)"/><rect x="571" y="219" width="3" height="442" fill="url(#st)"/><rect x="129" y="219" width="13" height="441" fill="#5050ff"/><rect x="129" y="209" width="13" height="2" fill="#5a5ad0"/><rect x="169" y="158" width="167" height="92" fill="#000"/><rect x="881" y="158" width="92" height="22" fill="#000"/><rect x="684" y="517" width="3" height="143" fill="#fff"/><rect x="685.5" y="355.5" width="70" height="32" fill="#000" stroke="#4848b8" stroke-width="1"/></svg>
<div class="t" style="left:154.77px;top:154px;font-size:11px;color:#dcdcdc;font-weight:bold;">20</div>
<div class="t" style="left:154.77px;top:182px;font-size:11px;color:#dcdcdc;font-weight:bold;">10</div>
<div class="t" style="left:160.88px;top:214px;font-size:11px;color:#dcdcdc;font-weight:bold;">0</div>
<div class="t" style="left:151.10px;top:245px;font-size:11px;color:#dcdcdc;font-weight:bold;">-10</div>
<div class="t" style="left:151.10px;top:277px;font-size:11px;color:#dcdcdc;font-weight:bold;">-20</div>
<div class="t" style="left:151.10px;top:308px;font-size:11px;color:#dcdcdc;font-weight:bold;">-30</div>
<div class="t" style="left:151.10px;top:340px;font-size:11px;color:#dcdcdc;font-weight:bold;">-40</div>
<div class="t" style="left:151.10px;top:371px;font-size:11px;color:#dcdcdc;font-weight:bold;">-50</div>
<div class="t" style="left:151.10px;top:403px;font-size:11px;color:#dcdcdc;font-weight:bold;">-60</div>
<div class="t" style="left:151.10px;top:434px;font-size:11px;color:#dcdcdc;font-weight:bold;">-70</div>
<div class="t" style="left:151.10px;top:466px;font-size:11px;color:#dcdcdc;font-weight:bold;">-80</div>
<div class="t" style="left:151.10px;top:497px;font-size:11px;color:#dcdcdc;font-weight:bold;">-90</div>
<div class="t" style="left:144.99px;top:529px;font-size:11px;color:#dcdcdc;font-weight:bold;">-100</div>
<div class="t" style="left:145.59px;top:560px;font-size:11px;color:#dcdcdc;font-weight:bold;">-110</div>
<div class="t" style="left:144.99px;top:592px;font-size:11px;color:#dcdcdc;font-weight:bold;">-120</div>
<div class="t" style="left:144.99px;top:623px;font-size:11px;color:#dcdcdc;font-weight:bold;">-130</div>
<div class="t" style="left:144.99px;top:653px;font-size:11px;color:#dcdcdc;font-weight:bold;">-140</div>
<div class="t" style="left:129.00px;top:163px;font-size:11px;color:#dcdcdc;font-weight:bold;transform:scaleX(0.9354);transform-origin:0 0;">dBu</div>
<div class="t" style="left:162.18px;top:663px;font-size:11px;color:#dcdcdc;font-weight:bold;">20</div>
<div class="t" style="left:256.46px;top:663px;font-size:11px;color:#dcdcdc;font-weight:bold;">50</div>
<div class="t" style="left:324.72px;top:663px;font-size:11px;color:#dcdcdc;font-weight:bold;">100</div>
<div class="t" style="left:396.03px;top:663px;font-size:11px;color:#dcdcdc;font-weight:bold;">200</div>
<div class="t" style="left:490.31px;top:663px;font-size:11px;color:#dcdcdc;font-weight:bold;">500</div>
<div class="t" style="left:557.96px;top:663px;font-size:11px;color:#dcdcdc;font-weight:bold;">1kHz</div>
<div class="t" style="left:636.00px;top:663px;font-size:11px;color:#dcdcdc;font-weight:bold;">2k</div>
<div class="t" style="left:730.27px;top:663px;font-size:11px;color:#dcdcdc;font-weight:bold;">5k</div>
<div class="t" style="left:798.53px;top:663px;font-size:11px;color:#dcdcdc;font-weight:bold;">10k</div>
<div class="t" style="left:869.85px;top:663px;font-size:11px;color:#dcdcdc;font-weight:bold;">20k</div>
<div class="t" style="left:963.65px;top:663px;font-size:11px;color:#dcdcdc;font-weight:bold;">50k</div>
<div class="t" style="left:173.00px;top:154px;font-size:31px;color:#dadada;transform:scaleX(0.9493);transform-origin:0 0;">775.88</div>
<div class="t" style="left:278.00px;top:157px;font-size:12px;color:#dadada;transform:scaleX(0.9880);transform-origin:0 0;">Input Level</div>
<div class="t" style="left:278.00px;top:171px;font-size:12px;color:#dadada;">mV rms</div>
<div class="t" style="left:173.00px;top:185px;font-size:31px;color:#dadada;transform:scaleX(0.9493);transform-origin:0 0;">3.0271</div>
<div class="t" style="left:278.00px;top:188px;font-size:12px;color:#dadada;transform:scaleX(0.9880);transform-origin:0 0;">Input Level</div>
<div class="t" style="left:278.00px;top:202px;font-size:12px;color:#dadada;">dBu peak</div>
<div class="t" style="left:173.00px;top:216px;font-size:31px;color:#dadada;transform:scaleX(0.9493);transform-origin:0 0;">0.0143</div>
<div class="t" style="left:278.00px;top:219px;font-size:12px;color:#dadada;transform:scaleX(0.9880);transform-origin:0 0;">Input Level</div>
<div class="t" style="left:278.00px;top:233px;font-size:12px;color:#dadada;">dBu rms</div>
<div class="t" style="left:884px;top:157px;font-family:'Liberation Serif',serif;font-size:21px;color:#dcdcdc;">True</div>
<div class="t" style="left:925px;top:156px;font-size:22px;font-weight:bold;font-style:italic;color:#ec1632;-webkit-text-stroke:0.5px #ec1632;transform:scaleX(1.06);transform-origin:0 0;">RTA</div>
<div class="t" style="left:688.00px;top:356px;font-size:10px;color:#d4d4d4;font-weight:bold;">Workbench</div>
<div class="t" style="left:688.00px;top:366px;font-size:10px;color:#d4d4d4;font-weight:bold;transform:scaleX(1.0530);transform-origin:0 0;">3.044 kHz</div>
<div class="t" style="left:688.00px;top:376px;font-size:10px;color:#d4d4d4;font-weight:bold;transform:scaleX(1.0283);transform-origin:0 0;">-94.77 dBu</div>
<div style="position:absolute;left:51px;top:154px;width:74px;height:521px;background:#d4d0c8;"></div>
<div style="position:absolute;left:124px;top:154px;width:1px;height:521px;background:#fff;"></div>
<div class="t" style="left:61.00px;top:155px;font-size:11px;color:#000;transform:scaleX(0.9212);transform-origin:0 0;">- Generator -</div>
<svg style="position:absolute;left:84px;top:167px" width="11" height="11"><circle cx="5.5" cy="5" r="4.2" fill="#9a0000" stroke="#600000" stroke-width="0.8"/><circle cx="4.5" cy="4" r="1.2" fill="#c04040"/></svg>
<div style="position:absolute;left:58px;top:180px;width:63px;height:26px;background:#000;"></div>
<div style="position:absolute;left:59px;top:181px;width:61px;height:24px;background:#d4d0c8;box-shadow:inset 1px 1px #fff,inset -1px -1px #404040,inset -2px -2px #808080;"></div>
<div class="t" style="left:73.40px;top:188px;font-size:11px;color:#000;transform:scaleX(0.9007);transform-origin:50% 0;">On/Off</div>
<div style="position:absolute;left:59px;top:212px;width:61px;height:46px;border:1px solid #808080;box-shadow:1px 1px #fff, inset 1px 1px #fff;"></div>
<div style="position:absolute;left:65px;top:209px;width:29.67125px;height:6px;background:#d4d0c8;"></div>
<div class="t" style="left:67.00px;top:207px;font-size:11px;color:#000;">Freq.</div>
<div style="position:absolute;left:62px;top:222px;width:37px;height:19px;background:#fff;box-shadow:inset 1px 1px #808080,inset 2px 2px #404040,inset -1px -1px #fff,inset -2px -2px #d4d0c8;"></div>
<div class="t" style="left:72.53px;top:226px;font-size:11px;color:#000;transform:scaleX(0.9809);transform-origin:100% 0;">1016</div>
<div style="position:absolute;left:101px;top:220px;width:16px;height:12px;background:#d4d0c8;box-shadow:inset 1px 1px #fff,inset -1px -1px #404040,inset -2px -2px #808080;"></div>
<div style="position:absolute;left:101px;top:232px;width:16px;height:12px;background:#d4d0c8;box-shadow:inset 1px 1px #fff,inset -1px -1px #404040,inset -2px -2px #808080;"></div>
<svg style="position:absolute;left:101px;top:220px" width="16" height="24"><path d="M5.0 7.5 L11.0 7.5 L8.0 4.5 Z" fill="#000"/><path d="M5.0 16.5 L11.0 16.5 L8.0 19.5 Z" fill="#000"/></svg>
<div class="t" style="left:67.00px;top:245px;font-size:11px;color:#000;transform:scaleX(0.9572);transform-origin:0 0;">(in Hz)</div>
<div style="position:absolute;left:59px;top:268px;width:61px;height:46px;border:1px solid #808080;box-shadow:1px 1px #fff, inset 1px 1px #fff;"></div>
<div style="position:absolute;left:65px;top:265px;width:32.11703125px;height:6px;background:#d4d0c8;"></div>
<div class="t" style="left:67.00px;top:262px;font-size:11px;color:#000;">Ampl.</div>
<div style="position:absolute;left:62px;top:278px;width:37px;height:18px;background:#fff;box-shadow:inset 1px 1px #808080,inset 2px 2px #404040,inset -1px -1px #fff,inset -2px -2px #d4d0c8;"></div>
<div class="t" style="left:81.71px;top:281px;font-size:11px;color:#000;">0.0</div>
<div style="position:absolute;left:101px;top:275px;width:16px;height:12px;background:#d4d0c8;box-shadow:inset 1px 1px #fff,inset -1px -1px #404040,inset -2px -2px #808080;"></div>
<div style="position:absolute;left:101px;top:287px;width:16px;height:13px;background:#d4d0c8;box-shadow:inset 1px 1px #fff,inset -1px -1px #404040,inset -2px -2px #808080;"></div>
<svg style="position:absolute;left:101px;top:275px" width="16" height="25"><path d="M5.0 7.5 L11.0 7.5 L8.0 4.5 Z" fill="#000"/><path d="M5.0 17.0 L11.0 17.0 L8.0 20.0 Z" fill="#000"/></svg>
<div class="t" style="left:63.00px;top:300px;font-size:11px;color:#000;transform:scaleX(0.9347);transform-origin:0 0;">(in dBu)</div>
<div style="position:absolute;left:59px;top:323px;width:61px;height:124px;border:1px solid #808080;box-shadow:1px 1px #fff, inset 1px 1px #fff;"></div>
<div style="position:absolute;left:65px;top:320px;width:33px;height:6px;background:#d4d0c8;"></div>
<div class="t" style="left:67.00px;top:318px;font-size:11px;color:#000;transform:scaleX(1.0466);transform-origin:0 0;">Wave</div>
<div style="position:absolute;left:67px;top:331px;width:45px;height:16px;background:#eeede9;box-shadow:inset 1px 1px #404040,inset 2px 2px #808080,inset -1px -1px #fff;"></div>
<div class="t" style="left:78.49px;top:334px;font-size:11px;color:#000;">Sine</div>
<div style="position:absolute;left:67px;top:347px;width:45px;height:16px;background:#d4d0c8;box-shadow:inset 1px 1px #fff,inset -1px -1px #404040,inset -2px -2px #808080;"></div>
<div class="t" style="left:71.77px;top:349px;font-size:11px;color:#000;">Square</div>
<div style="position:absolute;left:67px;top:363px;width:45px;height:16px;background:#d4d0c8;box-shadow:inset 1px 1px #fff,inset -1px -1px #404040,inset -2px -2px #808080;"></div>
<div class="t" style="left:69.83px;top:366px;font-size:11px;color:#000;">Triangle</div>
<div style="position:absolute;left:67px;top:379px;width:45px;height:16px;background:#d4d0c8;box-shadow:inset 1px 1px #fff,inset -1px -1px #404040,inset -2px -2px #808080;"></div>
<div class="t" style="left:78.80px;top:382px;font-size:11px;color:#000;">Saw</div>
<div style="position:absolute;left:67px;top:395px;width:45px;height:16px;background:#d4d0c8;box-shadow:inset 1px 1px #fff,inset -1px -1px #404040,inset -2px -2px #808080;"></div>
<div class="t" style="left:70.24px;top:398px;font-size:11px;color:#000;">Impulse</div>
<div style="position:absolute;left:67px;top:411px;width:45px;height:16px;background:#d4d0c8;box-shadow:inset 1px 1px #fff,inset -1px -1px #404040,inset -2px -2px #808080;"></div>
<div class="t" style="left:73.30px;top:414px;font-size:11px;color:#000;">Pink N</div>
<div style="position:absolute;left:67px;top:428px;width:45px;height:16px;background:#d4d0c8;box-shadow:inset 1px 1px #fff,inset -1px -1px #404040,inset -2px -2px #808080;"></div>
<div class="t" style="left:69.94px;top:430px;font-size:11px;color:#000;">White N</div>
<div style="position:absolute;left:59px;top:448px;width:62px;height:35px;background:#d4d0c8;box-shadow:inset 1px 1px #fff,inset -1px -1px #404040,inset -3px -3px #d4d0c8,inset -4px -4px #404040,inset -5px -5px #808080;"></div>
<div class="t" style="left:75.44px;top:452px;font-size:11px;color:#000;">Quick</div>
<div class="t" style="left:72.68px;top:465px;font-size:11px;color:#000;">Sweep</div>
<div style="position:absolute;left:986px;top:154px;width:94px;height:524px;background:#d4d0c8;"></div>
<div class="t" style="left:1008.00px;top:156px;font-size:11px;color:#000;transform:scaleX(0.9168);transform-origin:0 0;">- Analyzer -</div>
<div style="position:absolute;left:992px;top:176px;width:83px;height:37px;border:1px solid #808080;box-shadow:1px 1px #fff, inset 1px 1px #fff;"></div>
<div style="position:absolute;left:1000px;top:173px;width:38.045px;height:6px;background:#d4d0c8;"></div>
<div class="t" style="left:1002.00px;top:171px;font-size:11px;color:#000;">dB Top</div>
<div style="position:absolute;left:994px;top:186px;width:14px;height:12px;background:#d4d0c8;box-shadow:inset 1px 1px #fff,inset -1px -1px #404040,inset -2px -2px #808080;"></div>
<div style="position:absolute;left:994px;top:198px;width:14px;height:13px;background:#d4d0c8;box-shadow:inset 1px 1px #fff,inset -1px -1px #404040,inset -2px -2px #808080;"></div>
<svg style="position:absolute;left:994px;top:186px" width="14" height="25"><path d="M4.0 7.5 L10.0 7.5 L7.0 4.5 Z" fill="#000"/><path d="M4.0 17.0 L10.0 17.0 L7.0 20.0 Z" fill="#000"/></svg>
<div style="position:absolute;left:1008px;top:188px;width:64px;height:21px;background:#fff;box-shadow:inset 1px 1px #808080,inset 2px 2px #404040,inset -1px -1px #fff,inset -2px -2px #d4d0c8;"></div>
<div class="t" style="left:1011.00px;top:192px;font-size:11px;color:#000;">20 dBu</div>
<div style="position:absolute;left:992px;top:223px;width:83px;height:37px;border:1px solid #808080;box-shadow:1px 1px #fff, inset 1px 1px #fff;"></div>
<div style="position:absolute;left:1000px;top:220px;width:55.35625px;height:6px;background:#d4d0c8;"></div>
<div class="t" style="left:1002.00px;top:218px;font-size:11px;color:#000;">dB Bottom</div>
<div style="position:absolute;left:994px;top:233px;width:14px;height:12px;background:#d4d0c8;box-shadow:inset 1px 1px #fff,inset -1px -1px #404040,inset -2px -2px #808080;"></div>
<div style="position:absolute;left:994px;top:245px;width:14px;height:13px;background:#d4d0c8;box-shadow:inset 1px 1px #fff,inset -1px -1px #404040,inset -2px -2px #808080;"></div>
<svg style="position:absolute;left:994px;top:233px" width="14" height="25"><path d="M4.0 7.5 L10.0 7.5 L7.0 4.5 Z" fill="#000"/><path d="M4.0 17.0 L10.0 17.0 L7.0 20.0 Z" fill="#000"/></svg>
<div style="position:absolute;left:1008px;top:235px;width:64px;height:21px;background:#fff;box-shadow:inset 1px 1px #808080,inset 2px 2px #404040,inset -1px -1px #fff,inset -2px -2px #d4d0c8;"></div>
<div class="t" style="left:1011.00px;top:239px;font-size:11px;color:#000;">-140 dBu</div>
<div style="position:absolute;left:992px;top:278px;width:83px;height:35px;border:1px solid #808080;box-shadow:1px 1px #fff, inset 1px 1px #fff;"></div>
<div style="position:absolute;left:1000px;top:275px;width:66.3390625px;height:6px;background:#d4d0c8;"></div>
<div class="t" style="left:1002.00px;top:272px;font-size:11px;color:#000;">Hi Freq Limit</div>
<div style="position:absolute;left:994px;top:287px;width:14px;height:12px;background:#d4d0c8;box-shadow:inset 1px 1px #fff,inset -1px -1px #404040,inset -2px -2px #808080;"></div>
<div style="position:absolute;left:994px;top:299px;width:14px;height:12px;background:#d4d0c8;box-shadow:inset 1px 1px #fff,inset -1px -1px #404040,inset -2px -2px #808080;"></div>
<svg style="position:absolute;left:994px;top:287px" width="14" height="24"><path d="M4.0 7.5 L10.0 7.5 L7.0 4.5 Z" fill="#000"/><path d="M4.0 16.5 L10.0 16.5 L7.0 19.5 Z" fill="#000"/></svg>
<div style="position:absolute;left:1008px;top:289px;width:64px;height:20px;background:#fff;box-shadow:inset 1px 1px #808080,inset 2px 2px #404040,inset -1px -1px #fff,inset -2px -2px #d4d0c8;"></div>
<div class="t" style="left:1011.00px;top:293px;font-size:11px;color:#000;">50 kHz</div>
<div style="position:absolute;left:992px;top:325px;width:83px;height:35px;border:1px solid #808080;box-shadow:1px 1px #fff, inset 1px 1px #fff;"></div>
<div style="position:absolute;left:1000px;top:322px;width:68.185px;height:6px;background:#d4d0c8;"></div>
<div class="t" style="left:1002.00px;top:319px;font-size:11px;color:#000;">Lo Freq Limit</div>
<div style="position:absolute;left:994px;top:334px;width:14px;height:11px;background:#d4d0c8;box-shadow:inset 1px 1px #fff,inset -1px -1px #404040,inset -2px -2px #808080;"></div>
<div style="position:absolute;left:994px;top:345px;width:14px;height:12px;background:#d4d0c8;box-shadow:inset 1px 1px #fff,inset -1px -1px #404040,inset -2px -2px #808080;"></div>
<svg style="position:absolute;left:994px;top:334px" width="14" height="23"><path d="M4.0 7.0 L10.0 7.0 L7.0 4.0 Z" fill="#000"/><path d="M4.0 15.5 L10.0 15.5 L7.0 18.5 Z" fill="#000"/></svg>
<div style="position:absolute;left:1008px;top:336px;width:64px;height:20px;background:#fff;box-shadow:inset 1px 1px #808080,inset 2px 2px #404040,inset -1px -1px #fff,inset -2px -2px #d4d0c8;"></div>
<div class="t" style="left:1011.00px;top:340px;font-size:11px;color:#000;">20 Hz</div>
<div class="t" style="left:992.00px;top:370px;font-size:11px;color:#000;">RTA Resolution:</div>
<div style="position:absolute;left:992px;top:384px;width:82px;height:20px;background:#fff;box-shadow:inset 1px 1px #808080,inset 2px 2px #404040,inset -1px -1px #fff,inset -2px -2px #d4d0c8;"></div>
<div style="position:absolute;left:1058px;top:386px;width:14px;height:16px;background:#d4d0c8;box-shadow:inset 1px 1px #fff,inset -1px -1px #404040,inset -2px -2px #808080;"></div>
<svg style="position:absolute;left:1058px;top:386px" width="14" height="16"><path d="M3 6 H11 L7 10 Z" fill="#000"/></svg>
<div class="t" style="left:996.00px;top:388px;font-size:11px;color:#000;">1/24 Oct.</div>
<div class="t" style="left:992.00px;top:409px;font-size:11px;color:#000;">Speed Tradeoff:</div>
<div style="position:absolute;left:992px;top:423px;width:82px;height:20px;background:#fff;box-shadow:inset 1px 1px #808080,inset 2px 2px #404040,inset -1px -1px #fff,inset -2px -2px #d4d0c8;"></div>
<div style="position:absolute;left:1058px;top:425px;width:14px;height:16px;background:#d4d0c8;box-shadow:inset 1px 1px #fff,inset -1px -1px #404040,inset -2px -2px #808080;"></div>
<svg style="position:absolute;left:1058px;top:425px" width="14" height="16"><path d="M3 6 H11 L7 10 Z" fill="#000"/></svg>
<div class="t" style="left:996.00px;top:427px;font-size:11px;color:#000;">20 Hz (slow)</div>
<div class="t" style="left:992.00px;top:448px;font-size:11px;color:#000;">Averages:</div>
<div style="position:absolute;left:992px;top:461px;width:83px;height:20px;background:#fff;box-shadow:inset 1px 1px #808080,inset 2px 2px #404040,inset -1px -1px #fff,inset -2px -2px #d4d0c8;"></div>
<div class="t" style="left:1054.65px;top:464px;font-size:11px;color:#000;">100</div>
<div class="t" style="left:161.00px;top:680px;font-size:11px;color:#000;transform:scaleX(0.9437);transform-origin:0 0;">Notes:</div>
<div style="position:absolute;left:196px;top:679px;width:630px;height:66px;background:#fff;"></div>
<div class="t" style="left:197.00px;top:680px;font-size:11px;color:#000;transform:scaleX(0.9523);transform-origin:0 0;">.1. Project Filename: Untitled Project</div>
<div class="t" style="left:388.00px;top:680px;font-size:11px;color:#000;transform:scaleX(0.9755);transform-origin:0 0;">Data acquired: 14Jun2011, 2:23 PM</div>
<div class="t" style="left:197.00px;top:693px;font-size:11px;color:#000;transform:scaleX(0.9473);transform-origin:0 0;">.2. Mic Cal File: Mic Correction was OFF</div>
<div class="t" style="left:436.00px;top:693px;font-size:11px;color:#000;transform:scaleX(0.9694);transform-origin:0 0;">Input f(s) = 96 kHz   Output f(s) = 96 kHz</div>
<div class="t" style="left:197.00px;top:706px;font-size:11px;color:#000;transform:scaleX(0.9486);transform-origin:0 0;">.3. House Curve File: House Curve was OFF</div>
<div class="t" style="left:485.00px;top:706px;font-size:11px;color:#000;transform:scaleX(0.9519);transform-origin:0 0;">FFT Size = 64 k</div>
<div class="t" style="left:197.00px;top:719px;font-size:11px;color:#000;transform:scaleX(0.9579);transform-origin:0 0;">.4. Data was acquired manually</div>
<div class="t" style="left:436.00px;top:719px;font-size:11px;color:#000;transform:scaleX(0.9883);transform-origin:0 0;">Input Selection: L</div>
<div class="t" style="left:580.00px;top:719px;font-size:11px;color:#000;transform:scaleX(0.9821);transform-origin:0 0;">No. of Averages = 100</div>
<div class="t" style="left:197.00px;top:732px;font-size:11px;color:#000;transform:scaleX(0.9424);transform-origin:0 0;">.5. Sound System Correction: OFF</div>
<div class="t" style="left:436.00px;top:732px;font-size:11px;color:#000;transform:scaleX(0.9658);transform-origin:0 0;">Relative Mode:  OFF</div>
<div class="t" style="left:580.00px;top:732px;font-size:11px;color:#000;transform:scaleX(0.9638);transform-origin:0 0;">Peak Hold: OFF</div>
<div style="position:absolute;left:53px;top:745px;width:1028px;height:1px;background:#808080;"></div>
<div style="position:absolute;left:53px;top:746px;width:1028px;height:1px;background:#fff;"></div>
<div class="t" style="left:54.00px;top:751px;font-size:11px;color:#000;">Use Alt+Space to start or stop input processing</div>
<div style="position:absolute;left:816px;top:749px;width:155px;height:16px;box-shadow:inset 1px 1px #808080,inset -1px -1px #fff;"></div>
<div class="t" style="left:818.00px;top:752px;font-size:11px;color:#000;">Workbench</div>
<div style="position:absolute;left:972px;top:749px;width:27px;height:16px;box-shadow:inset 1px 1px #808080,inset -1px -1px #fff;"></div>
<div style="position:absolute;left:1001px;top:749px;width:28px;height:16px;box-shadow:inset 1px 1px #808080,inset -1px -1px #fff;"></div>
<div style="position:absolute;left:1031px;top:749px;width:31px;height:16px;box-shadow:inset 1px 1px #808080,inset -1px -1px #fff;"></div>
<svg style="position:absolute;left:1066px;top:752px" width="14" height="14"><path d="M13 1 L1 13 M13 5 L5 13 M13 9 L9 13" stroke="#808080" stroke-width="1.2"/><path d="M13 2 L2 13 M13 6 L6 13 M13 10 L10 13" stroke="#fff" stroke-width="0.6"/></svg>
</body></html>
